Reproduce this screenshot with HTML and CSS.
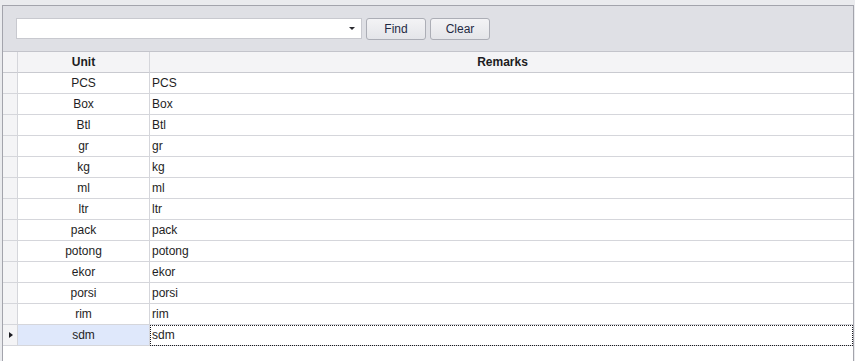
FILE: index.html
```html
<!DOCTYPE html>
<html lang="en">
<head>
    <meta charset="UTF-8">
    <title>Unit</title>
    <link rel="stylesheet" href="styles.css">
</head>
<body>
<div class="unit-wrap">
    <div class="find-panel">
        <div class="find-combo">
            <span class="combo-arrow"></span>
        </div>
        <button class="find-btn">Find</button>
        <button class="find-btn">Clear</button>
    </div>
    <div class="grid">
        <div class="cell ind head"></div>
        <div class="cell unit head">Unit</div>
        <div class="cell remarks head center">Remarks</div>

        <div class="cell ind"></div><div class="cell unit">PCS</div><div class="cell remarks">PCS</div>
        <div class="cell ind"></div><div class="cell unit">Box</div><div class="cell remarks">Box</div>
        <div class="cell ind"></div><div class="cell unit">Btl</div><div class="cell remarks">Btl</div>
        <div class="cell ind"></div><div class="cell unit">gr</div><div class="cell remarks">gr</div>
        <div class="cell ind"></div><div class="cell unit">kg</div><div class="cell remarks">kg</div>
        <div class="cell ind"></div><div class="cell unit">ml</div><div class="cell remarks">ml</div>
        <div class="cell ind"></div><div class="cell unit">ltr</div><div class="cell remarks">ltr</div>
        <div class="cell ind"></div><div class="cell unit">pack</div><div class="cell remarks">pack</div>
        <div class="cell ind"></div><div class="cell unit">potong</div><div class="cell remarks">potong</div>
        <div class="cell ind"></div><div class="cell unit">ekor</div><div class="cell remarks">ekor</div>
        <div class="cell ind"></div><div class="cell unit">porsi</div><div class="cell remarks">porsi</div>
        <div class="cell ind"></div><div class="cell unit">rim</div><div class="cell remarks">rim</div>
        <div class="cell ind current"><span class="row-arrow"></span></div><div class="cell unit selected">sdm</div><div class="cell remarks focused">sdm</div>
    </div>
</div>
</body>
</html>
```

FILE: styles.css
```css
html, body{
    margin:0px;
    height:100%;
    overflow:hidden;
}
body{
    background-color:#eaebee;
    font-family:"Liberation Sans", Arial, sans-serif;
    font-size:12px;
    color:#1e1e24;
}
.unit-wrap{
    margin:5px 0px 0px 2px;
    width:852px;
    height:360px;
    box-sizing:border-box;
    border:1px solid #a3a4ac;
    border-bottom:0px;
    background-color:white;
}
.find-panel{
    display:flex;
    align-items:flex-start;
    gap:4px;
    height:46px;
    box-sizing:border-box;
    padding:12px 13px;
    background-color:#dfe0e5;
    border-bottom:1px solid #c3c4cb;
}
.find-combo{
    position:relative;
    width:346px;
    height:21px;
    box-sizing:border-box;
    background-color:white;
    border:1px solid #c8c9cf;
}
.combo-arrow{
    position:absolute;
    right:6px;
    top:8px;
    width:0px;
    height:0px;
    border-left:3px solid transparent;
    border-right:3px solid transparent;
    border-top:3px solid #2b2b30;
}
.find-btn{
    width:60px;
    height:22px;
    padding:0px;
    margin:0px;
    font-family:"Liberation Sans", Arial, sans-serif;
    font-size:12px;
    color:#1f2a44;
    background:linear-gradient(#f3f3f5, #e4e5e9);
    border:1px solid #acaeb6;
    border-radius:3px;
}
.grid{
    display:grid;
    grid-template-columns:15px 132px 1fr;
    grid-auto-rows:21px;
}
.cell{
    box-sizing:border-box;
    border-right:1px solid #d5d6db;
    border-bottom:1px solid #d5d6db;
    line-height:20px;
    white-space:nowrap;
}
.cell.remarks{
    border-right:0px;
    padding-left:2px;
}
.cell.unit{
    text-align:center;
}
.cell.head{
    background-color:#f4f4f6;
    font-weight:bold;
    color:#1c1c22;
    border-bottom-color:#c9cad0;
}
.cell.center{
    text-align:center;
}
.cell.ind{
    background-color:#f4f4f6;
    position:relative;
}
.row-arrow{
    position:absolute;
    left:6px;
    top:7px;
    width:0px;
    height:0px;
    border-top:3px solid transparent;
    border-bottom:3px solid transparent;
    border-left:4px solid #1c1c22;
}
.cell.selected{
    background-color:#dfe8fb;
}
.cell.focused{
    outline:1px dotted #1c1c22;
    outline-offset:-1px;
    padding-left:2px;
}
```
